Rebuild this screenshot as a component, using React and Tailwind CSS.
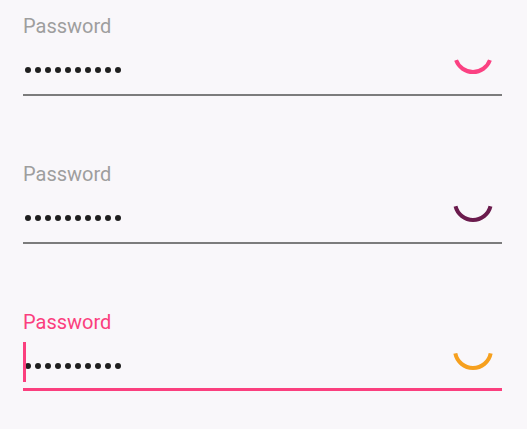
const fields = [
  {
    focused: false,
    arc: "#fb4182",
    d: "M40.91 30.16 A18 18 0 0 1 7.09 30.16",
  },
  {
    focused: false,
    arc: "#6b1b4d",
    d: "M41.47 28.35 A18 18 0 0 1 6.53 28.35",
  },
  {
    focused: true,
    arc: "#f6a01e",
    d: "M41.67 27.43 A18 18 0 0 1 6.33 27.43",
  },
];

function Dots() {
  return (
    <div className="flex gap-[4px]">
      {Array.from({ length: 10 }).map((_, i) => (
        <span key={i} className="block w-[6px] h-[6px] rounded-full bg-[#1f1f1f]" />
      ))}
    </div>
  );
}

function PasswordField({ focused, arc, d }) {
  return (
    <div className="mb-[66px]">
      <label
        className={
          "block h-[22px] leading-[24px] text-[20px] " +
          (focused ? "text-[#fb3f7e]" : "text-[#9e9e9e]")
        }
      >
        Password
      </label>
      <div
        className={
          "flex items-start " +
          (focused
            ? "h-[59px] border-b-[3px] border-[#fb3f7e]"
            : "h-[60px] border-b-2 border-[#7c7c7c]")
        }
      >
        <div className="relative mt-[31px] pl-[2px]">
          {focused && (
            <span className="absolute left-0 top-[-21px] w-[3px] h-[40px] bg-[#fb3f7e]" />
          )}
          <Dots />
        </div>
        <svg
          width="48"
          height="48"
          viewBox="0 0 48 48"
          className="ml-auto mr-[5px] -mt-[6px]"
        >
          <path d={d} fill="none" stroke={arc} strokeWidth="4" />
        </svg>
      </div>
    </div>
  );
}

export default function App() {
  return (
    <div
      className="w-[527px] h-[429px] overflow-hidden bg-[#f9f7fa] pl-[23px] pr-[25px] pt-[14px]"
      style={{ fontFamily: "Roboto, 'Noto Sans', sans-serif" }}
    >
      {fields.map((f, i) => (
        <PasswordField key={i} {...f} />
      ))}
    </div>
  );
}
